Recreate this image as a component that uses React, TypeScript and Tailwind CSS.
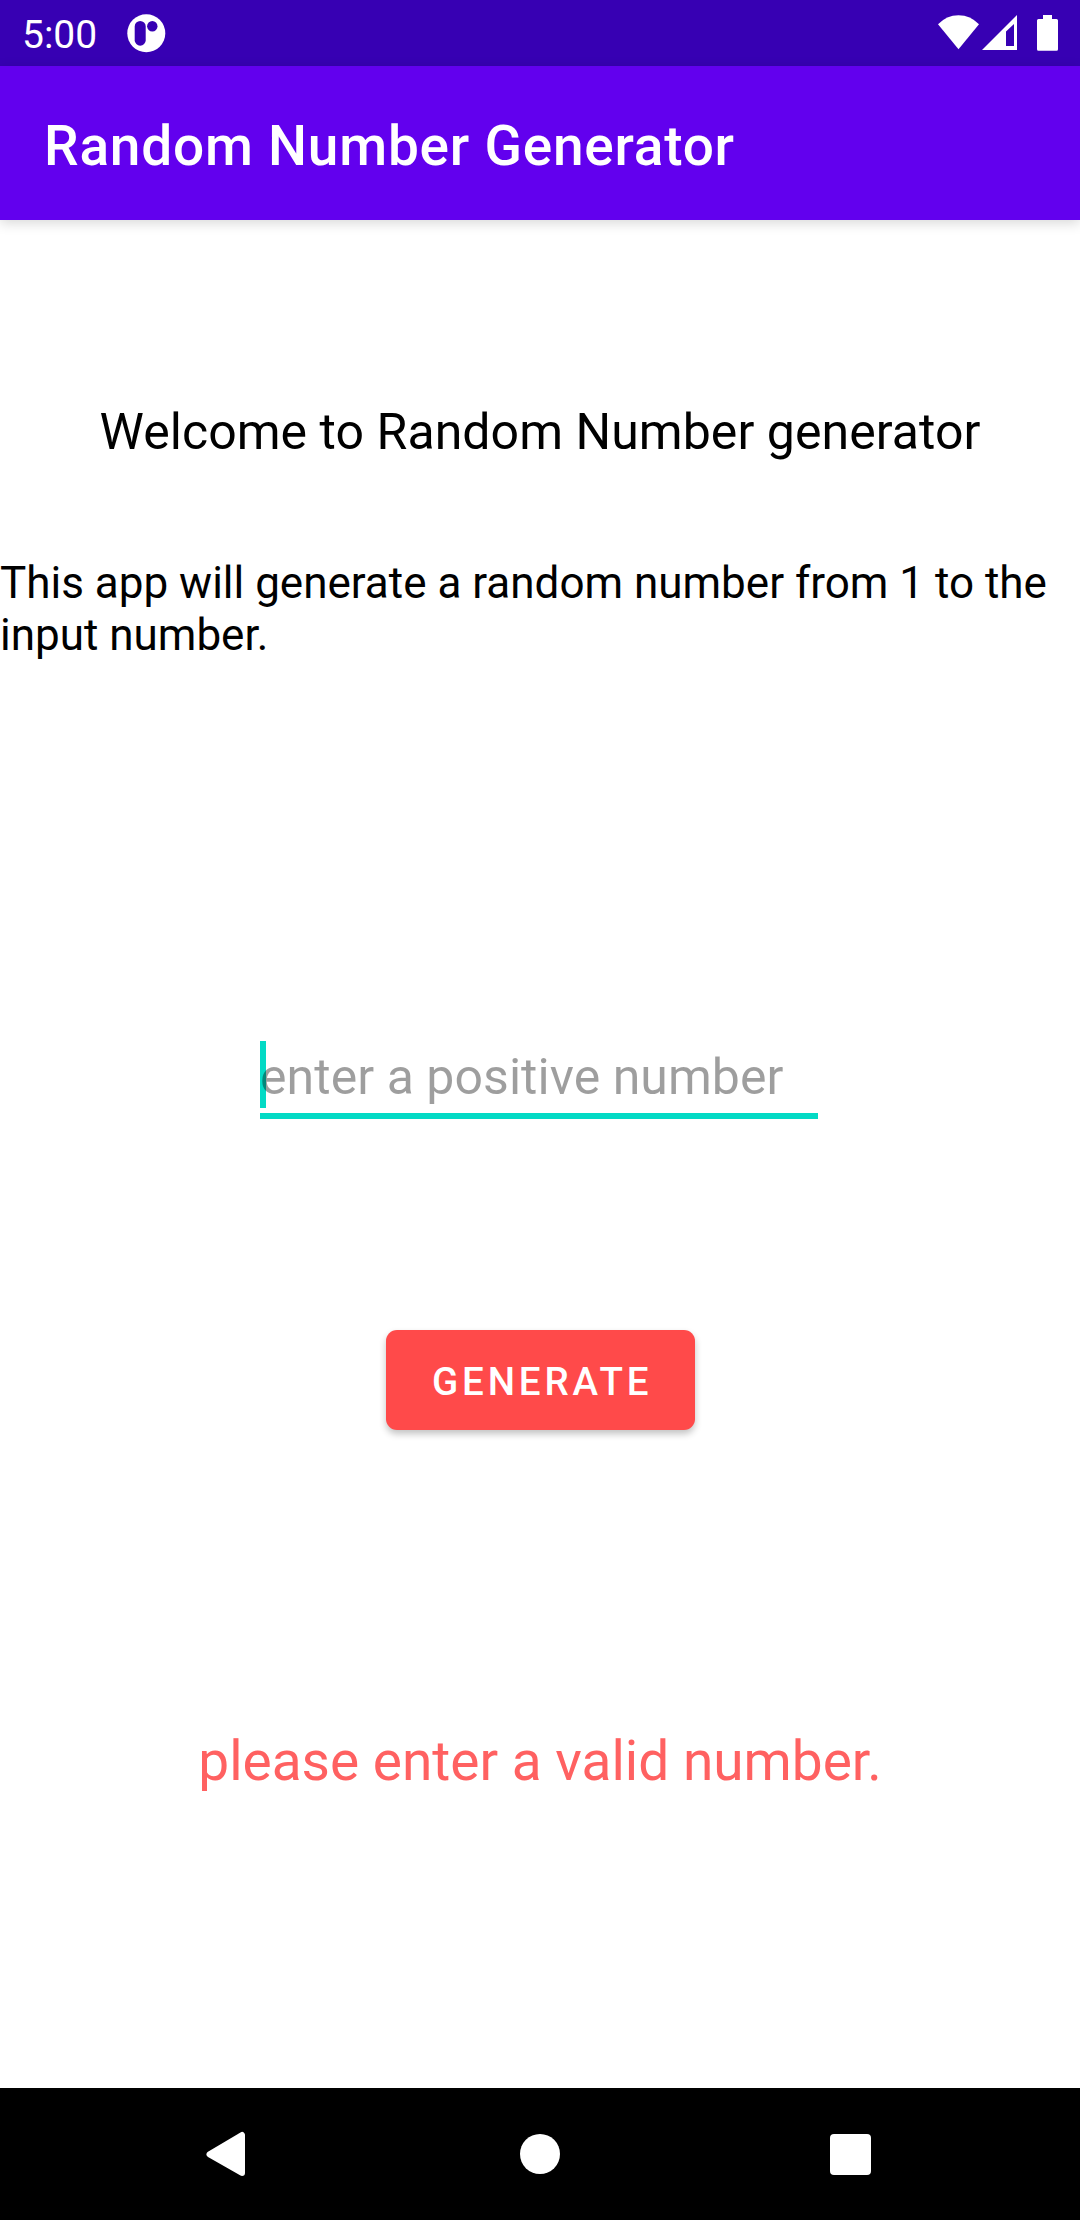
function StatusBar() {
  return (
    <div className="flex h-[66px] shrink-0 items-start justify-between bg-[#3700b3] pl-[22px] text-white">
      <div className="flex items-start">
        <span className="w-[105px] pt-[2px] text-[39px] leading-[66px]">5:00</span>
        <svg className="mt-[14px]" width="39" height="39" viewBox="0 0 39 39">
          <circle cx="19.300" cy="19.200" r="19" fill="#fff" />
          <rect x="7.700" y="7" width="11" height="24.700" rx="5.500" fill="#3700b3" />
          <circle cx="25.300" cy="12.300" r="5.200" fill="#3700b3" />
        </svg>
      </div>
      <svg width="160" height="66" viewBox="920 0 160 66" fill="#fff">
        <path d="M938 24.300Q946.500 15.200 958.500 15.200T979 24.300L958.500 49.300Z" />
        <path fillRule="evenodd" d="M1017 15V50H982ZM1014 24L1006 31.500V46H1014Z" />
        <path d="M1043 15h9v4h4.500q1.500 0 1.500 1.500v28.800q0 1.500-1.500 1.500h-18q-1.500 0-1.500-1.500V20.500q0-1.500 1.500-1.500h4.500z" />
      </svg>
    </div>
  );
}

function NavigationBar() {
  return (
    <nav className="flex h-[132px] shrink-0 items-center bg-black pl-[206px]">
      <svg width="40" height="46" viewBox="0 0 40 46" fill="#fff" stroke="#fff" strokeWidth="6" strokeLinejoin="round">
        <path d="M36 4V42L3.500 23.300Z" />
      </svg>
      <div className="ml-[274px] size-10 rounded-full bg-white" />
      <div className="ml-[270px] size-[41px] rounded-[4px] bg-white" />
    </nav>
  );
}

export default function App() {
  return (
    <div className="flex h-[2220px] w-[1080px] flex-col overflow-hidden bg-white font-['Roboto',sans-serif] text-black">
      <StatusBar />
      <header className="z-10 flex h-[154px] shrink-0 items-center bg-[#6200ee] px-11 pt-[6px] shadow-[0_3px_12px_rgba(0,0,0,0.16)]">
        <h1 className="text-[55px] font-medium leading-[64px] tracking-[0.77px] text-white">Random Number Generator</h1>
      </header>
      <main className="flex flex-1 flex-col">
        <p className="mt-[182px] text-center text-[50px] leading-[60px] tracking-[0.05px]">Welcome to Random Number generator</p>
        <p className="mt-[95px] text-[44px] leading-[52px]">
          This app will generate a random number from 1 to the
          <br />
          input number.
        </p>
        <div className="relative ml-[260px] mt-[380px] h-[78px] w-[558px] border-b-[6px] border-[#03dac5] text-[50px] leading-[72px]">
          <span className="absolute left-0 top-0 h-[67px] w-[6px] bg-[#03dac5]" />
          <span className="relative tracking-[0.05px] text-black/38">enter a positive number</span>
        </div>
        <button className="ml-[386px] mt-[211px] flex h-[100px] w-[309px] items-center rounded-[11px] bg-[#ff4a4a] pl-[46px] pt-[3px] text-[38.5px] font-medium tracking-[3.850px] text-white shadow-[0_4px_7px_rgba(0,0,0,0.24)]">
          GENERATE
        </button>
        <p className="mt-[299px] text-center text-[55px] leading-[64px] text-[#ff6161]">please enter a valid number.</p>
      </main>
      <NavigationBar />
    </div>
  );
}
